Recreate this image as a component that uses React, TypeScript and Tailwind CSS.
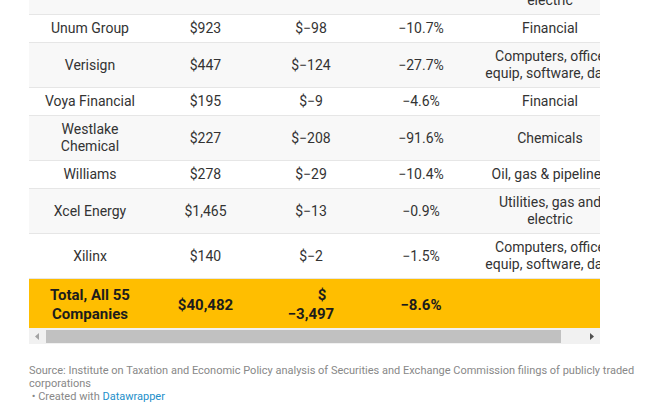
import React from "react";

type Row = {
  cells: React.ReactNode[];
  gray: boolean;
};

const W = ["w-[122px]", "w-[109px]", "w-[102px]", "w-[118px]", "w-[140px]"];

const rows: Row[] = [
  { cells: ["UGI", "", "", "", <>Utilities, gas and<br />electric</>], gray: true },
  { cells: ["Unum Group", "$923", "$\u221298", "\u221210.7%", "Financial"], gray: false },
  { cells: ["Verisign", "$447", "$\u2212124", "\u221227.7%", <>Computers, office<br />equip, software, data</>], gray: true },
  { cells: ["Voya Financial", "$195", "$\u22129", "\u22124.6%", "Financial"], gray: false },
  { cells: [<>Westlake<br />Chemical</>, "$227", "$\u2212208", "\u221291.6%", "Chemicals"], gray: true },
  { cells: ["Williams", "$278", "$\u221229", "\u221210.4%", "Oil, gas & pipelines"], gray: false },
  { cells: ["Xcel Energy", "$1,465", "$\u221213", "\u22120.9%", <>Utilities, gas and<br />electric</>], gray: true },
  { cells: ["Xilinx", "$140", "$\u22122", "\u22121.5%", <>Computers, office<br />equip, software, data</>], gray: false },
];

export default function App() {
  return (
    <div className="w-[646px] h-[411px] overflow-hidden bg-white font-['Roboto',sans-serif]">
      <div className="pl-[29px]">
        <div className="w-[571px] overflow-hidden -mt-[30px]">
          <div className="w-[620px] text-[14px] leading-[17px] text-[#333333]">
            {rows.map((r, i) => (
              <div
                key={i}
                className={`flex border-b border-[#e6e6e6] ${r.gray ? "bg-[#f8f8f8]" : "bg-white"}`}
              >
                {r.cells.map((c, j) => (
                  <div
                    key={j}
                    className={`${W[j]} shrink-0 py-[5px] flex items-center justify-center text-center whitespace-nowrap`}
                  >
                    <div>{c}</div>
                  </div>
                ))}
              </div>
            ))}
            <div className="flex bg-[#ffbe00] text-[15px] leading-[19px] font-bold text-[#1c1c1c]">
              <div className={`${W[0]} shrink-0 pt-[7px] pb-[4px] flex items-center justify-center text-center whitespace-nowrap`}>
                <div>Total, All 55<br />Companies</div>
              </div>
              <div className={`${W[1]} shrink-0 pt-[7px] pb-[4px] flex items-center justify-center text-center whitespace-nowrap`}>
                <div>$40,482</div>
              </div>
              <div className={`${W[2]} shrink-0 pt-[7px] pb-[4px] flex items-center justify-center text-center whitespace-nowrap`}>
                <div className="flex flex-col items-center">
                  <span className="pl-[22px]">$</span>
                  <span>{"\u22123,497"}</span>
                </div>
              </div>
              <div className={`${W[3]} shrink-0 pt-[7px] pb-[4px] flex items-center justify-center text-center whitespace-nowrap`}>
                <div>{"\u22128.6%"}</div>
              </div>
              <div className={`${W[4]} shrink-0`} />
            </div>
          </div>
        </div>
        {/* scrollbar */}
        <div className="w-[571px] h-[16px] bg-[#f1f1f1] flex items-start">
          <div className="w-[15px] h-[16px] flex items-center justify-center shrink-0">
            <svg width="4" height="7" viewBox="0 0 4 7">
              <polygon points="4,0 0,3.5 4,7" fill="#a3a3a3" />
            </svg>
          </div>
          <div className="flex-1 pt-[2px] pl-[2px]">
            <div className="w-[515px] h-[13px] bg-[#c1c1c1]" />
          </div>
          <div className="w-[17px] h-[16px] flex items-center justify-center shrink-0">
            <svg width="4" height="7" viewBox="0 0 4 7">
              <polygon points="0,0 4,3.5 0,7" fill="#505050" />
            </svg>
          </div>
        </div>
        {/* footer */}
        <div className="mt-[20px] text-[11px] leading-[13px] text-[#888888] whitespace-nowrap">
          <div>
            Source: Institute on Taxation and Economic Policy analysis of Securities and Exchange Commission filings of publicly traded
          </div>
          <div>corporations</div>
          <div>
            {"\u00a0\u2022 Created with "}
            <span className="text-[#1d8fca]">Datawrapper</span>
          </div>
        </div>
      </div>
    </div>
  );
}
